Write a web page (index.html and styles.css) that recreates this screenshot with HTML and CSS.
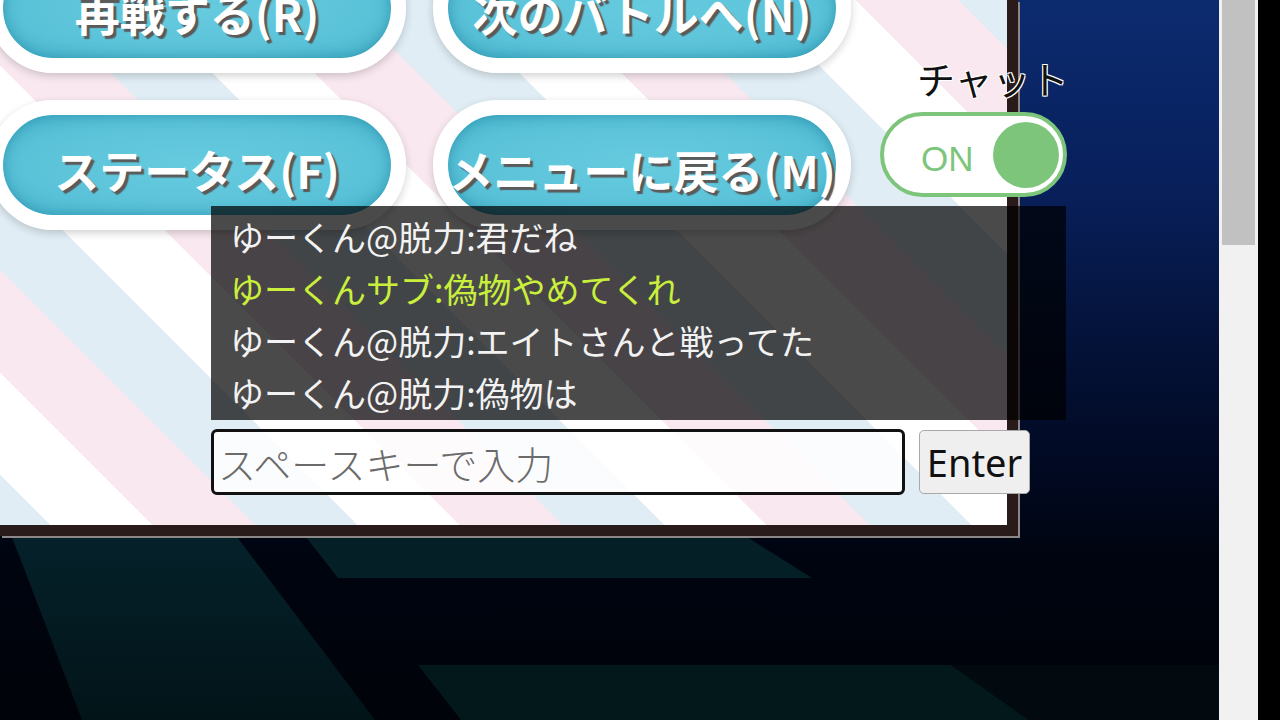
FILE: index.html
```html
<!DOCTYPE html>
<html lang="ja">
<head>
    <meta charset="UTF-8">
    <meta name="viewport" content="width=device-width, initial-scale=1.0">
    <title>バトル結果</title>
    <link rel="stylesheet" href="styles.css">
</head>
<body>
    <div class="window">
        <div class="screen">
            <!-- 床の模様 -->
            <svg class="floor" width="1219" height="720" viewBox="0 0 1219 720">
                <defs>
                    <linearGradient id="teal" x1="0" y1="0" x2="0" y2="1">
                        <stop offset="0" stop-color="#05212a"/>
                        <stop offset="1" stop-color="#021418"/>
                    </linearGradient>
                </defs>
                <polygon points="12,537 237,537 375,720 82,720" fill="url(#teal)"/>
                <polygon points="306,537 747,537 812,578 338,578" fill="#042026"/>
                <polygon points="418,665 951,665 1029,720 461,720" fill="#03181b"/>
                <polygon points="951,665 1219,665 1219,720 1029,720" fill="#020a10"/>
            </svg>

            <div class="game">
                <div class="game-top">
                    <div class="menu">
                        <button type="button" class="menu-btn">再戦する(R)</button>
                        <button type="button" class="menu-btn">次のバトルへ(N)</button>
                        <button type="button" class="menu-btn">ステータス(F)</button>
                        <button type="button" class="menu-btn">メニューに戻る(M)</button>
                    </div>
                    <div class="chat-switch">
                        <div class="chat-label">チャット</div>
                        <label class="toggle">
                            <input type="checkbox" checked>
                            <span class="toggle-text">ON</span>
                            <span class="toggle-knob"></span>
                        </label>
                    </div>
                </div>

                <div class="chat">
                    <ul class="chat-log">
                        <li>ゆーくん@脱力:君だね</li>
                        <li class="sub">ゆーくんサブ:偽物やめてくれ</li>
                        <li>ゆーくん@脱力:エイトさんと戦ってた</li>
                        <li>ゆーくん@脱力:偽物は</li>
                    </ul>
                    <form class="chat-form" name="chat_form">
                        <input type="text" class="chat-input" name="message" placeholder="スペースキーで入力">
                        <button type="submit" class="chat-send">Enter</button>
                    </form>
                </div>
            </div>
        </div>
        <div class="scrollbar">
            <div class="scroll-thumb"></div>
        </div>
        <div class="edge"></div>
    </div>
</body>
</html>
```

FILE: styles.css
```css
* {
    box-sizing: border-box;
}

html, body {
    margin: 0;
    height: 100%;
}

body {
    background: #000;
    overflow: hidden;
    font-family: "Noto Sans CJK JP", sans-serif;
}

.window {
    display: flex;
    width: 1280px;
    height: 720px;
}

.screen {
    position: relative;
    width: 1219px;
    height: 720px;
    overflow: hidden;
    background: linear-gradient(180deg, #0c2b6f 0%, #08205c 25%, #041238 48%, #01081e 68%, #00040f 78%, #000309 100%);
}

.floor {
    position: absolute;
    left: 0;
    top: 0;
}

/* ゲーム画面 */
.game {
    position: relative;
    width: 1018px;
    height: 536px;
    border-right: 11px solid #2a1b1b;
    border-bottom: 11px solid #2a1b1b;
    box-shadow: 2px 2px 0 #8d8686;
    background: repeating-linear-gradient(45deg, #e0edf4 0 36px, #fff 36px 108px, #f9e8f0 108px 181px, #e0edf4 181px 217px);
}

.game-top {
    display: flex;
    align-items: flex-start;
}

.menu {
    display: grid;
    grid-template-columns: 418px 418px;
    grid-auto-rows: 130px;
    gap: 27px;
    margin: -57px 0 0 -12px;
}

.menu-btn {
    border: 15px solid #fff;
    border-radius: 65px;
    padding: 8px 0 0;
    background: radial-gradient(ellipse at center, #67cbdf 0%, #5ac2d8 65%, #48b4cc 100%);
    box-shadow: inset 0 0 14px rgba(20, 120, 150, .55), 0 3px 8px rgba(0, 0, 0, .18);
    color: #fff;
    font-family: "Noto Sans CJK JP", sans-serif;
    font-weight: 700;
    font-size: 45px;
    line-height: 1;
    white-space: nowrap;
    text-shadow: 3px 3px 1px #5a5a5a;
}

/* チャット ON/OFF */
.chat-switch {
    width: 187px;
    margin: 55px 0 0 29px;
}

.chat-label {
    padding-left: 37px;
    font-size: 38px;
    line-height: 46px;
    color: #111;
    white-space: nowrap;
    text-shadow: 1px 1px 0 #fff, -1px -1px 0 #fff, 1px -1px 0 #fff, -1px 1px 0 #fff;
}

.toggle {
    display: flex;
    align-items: center;
    justify-content: space-between;
    width: 187px;
    height: 85px;
    margin-top: 11px;
    padding: 0 4px 0 37px;
    border: 4px solid #7ec57c;
    border-radius: 43px;
    background: #fff;
}

.toggle input {
    display: none;
}

.toggle-text {
    margin-top: 9px;
    font-family: "Liberation Sans", Arial, sans-serif;
    font-size: 35px;
    color: #7ec57c;
}

.toggle-knob {
    width: 66px;
    height: 66px;
    border-radius: 50%;
    background: #7ec57c;
}

/* チャット欄 (ボタンの上に重ねる) */
.chat {
    position: relative;
    width: 855px;
    margin: -24px 0 0 211px;
}

.chat-log {
    list-style: none;
    margin: 0;
    height: 214px;
    padding: 5px 0 1px 19px;
    background: rgba(0, 0, 0, .71);
    font-size: 34px;
    line-height: 52px;
    color: #f2f2f2;
    white-space: nowrap;
}

.chat-log .sub {
    color: #c9ee3c;
}

.chat-form {
    display: flex;
    align-items: flex-start;
    gap: 14px;
    margin-top: 9px;
}

.chat-input {
    width: 694px;
    height: 66px;
    padding: 0 4px;
    border: 3px solid #111;
    border-radius: 6px;
    background: rgba(255, 255, 255, .82);
    font-family: "Noto Sans CJK JP", sans-serif;
    font-weight: 300;
    font-size: 38px;
    color: #111;
}

.chat-input::placeholder {
    color: #6b6b6b;
}

.chat-send {
    width: 111px;
    height: 64px;
    margin-top: 1px;
    padding: 0;
    border: 1px solid #a9a9a9;
    border-radius: 5px;
    background: #efefef;
    font-family: "Noto Sans", sans-serif;
    font-size: 38px;
    color: #111;
}

/* スクロールバー */
.scrollbar {
    width: 39px;
    padding: 0 3px;
    background: #f1f1f1;
}

.scroll-thumb {
    height: 245px;
    background: #c1c1c1;
}

.edge {
    flex: 1;
    background: #000;
}
```
